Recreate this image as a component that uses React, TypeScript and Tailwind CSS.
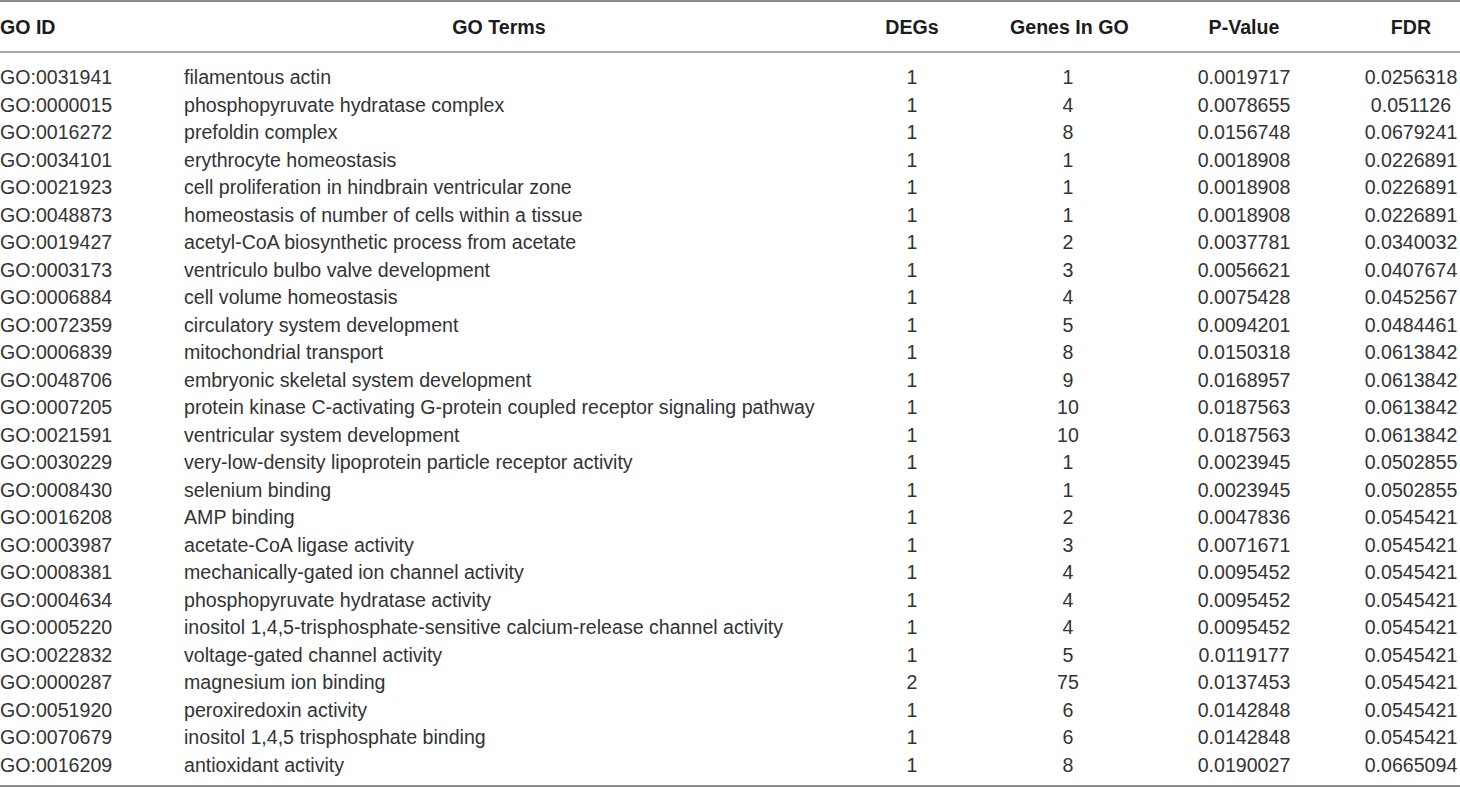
const rows: [string, string, number, number, string, string][] = [
  ['GO:0031941', 'filamentous actin', 1, 1, '0.0019717', '0.0256318'],
  ['GO:0000015', 'phosphopyruvate hydratase complex', 1, 4, '0.0078655', '0.051126'],
  ['GO:0016272', 'prefoldin complex', 1, 8, '0.0156748', '0.0679241'],
  ['GO:0034101', 'erythrocyte homeostasis', 1, 1, '0.0018908', '0.0226891'],
  ['GO:0021923', 'cell proliferation in hindbrain ventricular zone', 1, 1, '0.0018908', '0.0226891'],
  ['GO:0048873', 'homeostasis of number of cells within a tissue', 1, 1, '0.0018908', '0.0226891'],
  ['GO:0019427', 'acetyl-CoA biosynthetic process from acetate', 1, 2, '0.0037781', '0.0340032'],
  ['GO:0003173', 'ventriculo bulbo valve development', 1, 3, '0.0056621', '0.0407674'],
  ['GO:0006884', 'cell volume homeostasis', 1, 4, '0.0075428', '0.0452567'],
  ['GO:0072359', 'circulatory system development', 1, 5, '0.0094201', '0.0484461'],
  ['GO:0006839', 'mitochondrial transport', 1, 8, '0.0150318', '0.0613842'],
  ['GO:0048706', 'embryonic skeletal system development', 1, 9, '0.0168957', '0.0613842'],
  ['GO:0007205', 'protein kinase C-activating G-protein coupled receptor signaling pathway', 1, 10, '0.0187563', '0.0613842'],
  ['GO:0021591', 'ventricular system development', 1, 10, '0.0187563', '0.0613842'],
  ['GO:0030229', 'very-low-density lipoprotein particle receptor activity', 1, 1, '0.0023945', '0.0502855'],
  ['GO:0008430', 'selenium binding', 1, 1, '0.0023945', '0.0502855'],
  ['GO:0016208', 'AMP binding', 1, 2, '0.0047836', '0.0545421'],
  ['GO:0003987', 'acetate-CoA ligase activity', 1, 3, '0.0071671', '0.0545421'],
  ['GO:0008381', 'mechanically-gated ion channel activity', 1, 4, '0.0095452', '0.0545421'],
  ['GO:0004634', 'phosphopyruvate hydratase activity', 1, 4, '0.0095452', '0.0545421'],
  ['GO:0005220', 'inositol 1,4,5-trisphosphate-sensitive calcium-release channel activity', 1, 4, '0.0095452', '0.0545421'],
  ['GO:0022832', 'voltage-gated channel activity', 1, 5, '0.0119177', '0.0545421'],
  ['GO:0000287', 'magnesium ion binding', 2, 75, '0.0137453', '0.0545421'],
  ['GO:0051920', 'peroxiredoxin activity', 1, 6, '0.0142848', '0.0545421'],
  ['GO:0070679', 'inositol 1,4,5 trisphosphate binding', 1, 6, '0.0142848', '0.0545421'],
  ['GO:0016209', 'antioxidant activity', 1, 8, '0.0190027', '0.0665094'],
];

const cols = 'grid grid-cols-[184px_630px_196px_116px_236px_98px]';

export default function App() {
  return (
    <div
      className="w-[1460px] h-[788px] bg-white text-[19.6px] text-[#333333] overflow-hidden"
      style={{ fontFamily: '"Liberation Sans", Arial, sans-serif' }}
    >
      {/* Header */}
      <div className={`${cols} h-[53px] pt-[3px] items-center border-t-2 border-b-2 border-t-[#8c8c8c] border-b-[#a8a8a8] font-bold text-[#1c1c1c]`}>
        <div className="whitespace-nowrap">GO ID</div>
        <div className="text-center whitespace-nowrap">GO Terms</div>
        <div className="text-center whitespace-nowrap">DEGs</div>
        <div className="text-center whitespace-nowrap">Genes In GO</div>
        <div className="text-center whitespace-nowrap">P-Value</div>
        <div className="text-center whitespace-nowrap">FDR</div>
      </div>

      {/* Body */}
      <div className="pt-[11px] pb-[6px] border-b-2 border-[#8c8c8c]">
        {rows.map((r) => (
          <div key={r[0] + r[1]} className={`${cols} h-[27.5px] leading-[27.5px] whitespace-nowrap`}>
            <div>{r[0]}</div>
            <div>{r[1]}</div>
            <div className="text-center">{r[2]}</div>
            <div className="text-center">{r[3]}</div>
            <div className="text-center">{r[4]}</div>
            <div className="text-center">{r[5]}</div>
          </div>
        ))}
      </div>
    </div>
  );
}
